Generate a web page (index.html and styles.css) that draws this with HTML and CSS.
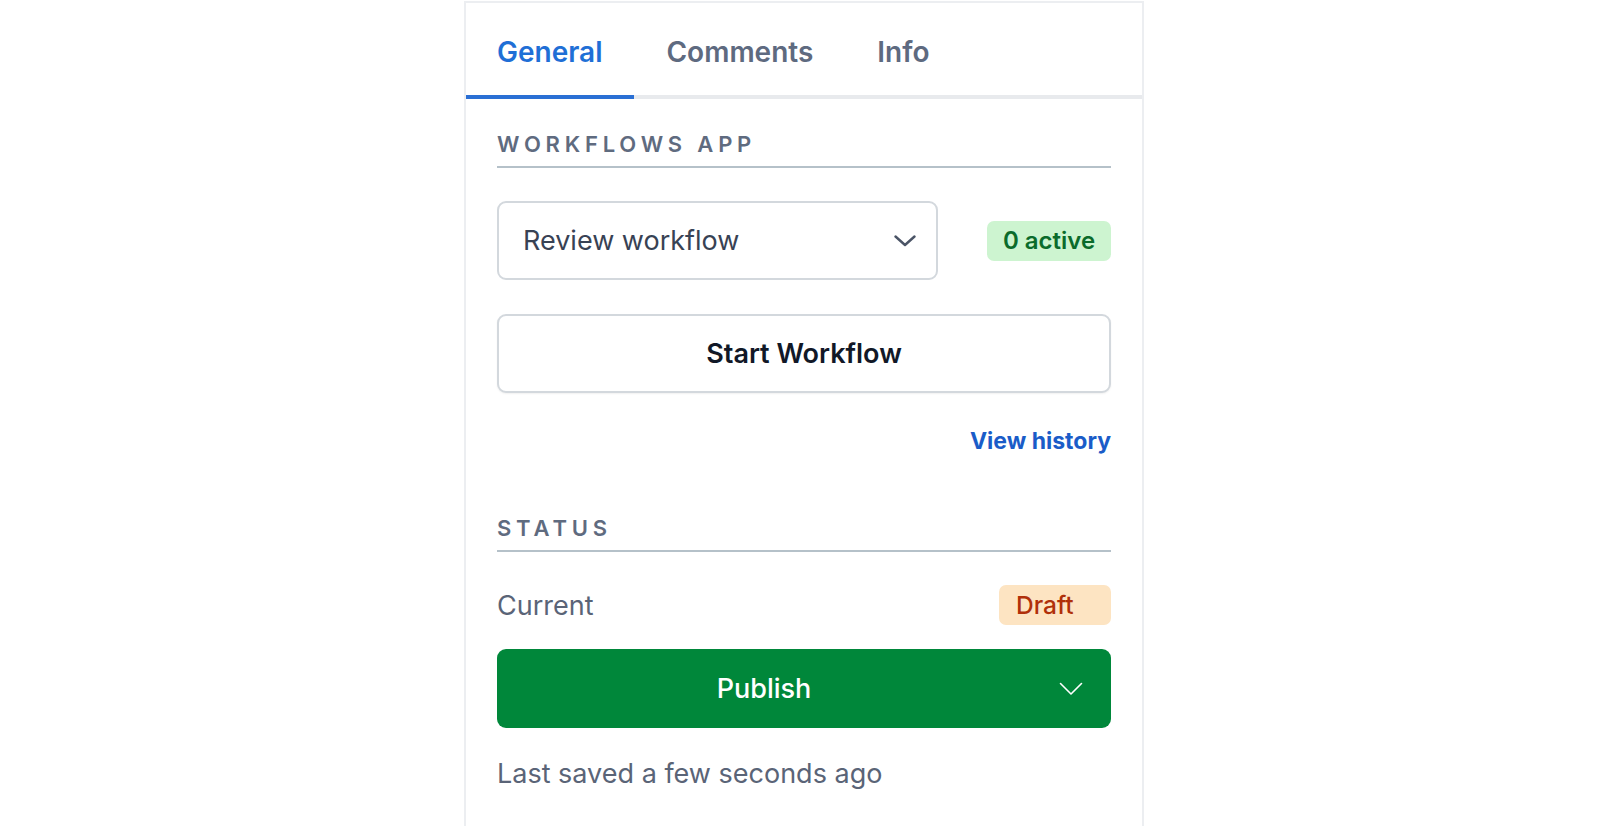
FILE: index.html
```html
<!DOCTYPE html>
<html>

<head>
    <title>Document Sidebar</title>
    <link rel="stylesheet" href="styles.css">
</head>

<body>
    <div class="panel">
        <nav class="tabs">
            <a class="tab active" href="#">General</a>
            <a class="tab" href="#">Comments</a>
            <a class="tab" href="#">Info</a>
        </nav>

        <div class="panel-body">
            <section class="section">
                <h2 class="section-title">Workflows app</h2>
                <div class="workflow-row">
                    <div class="select">
                        <span>Review workflow</span>
                        <svg class="chevron" width="22" height="12" viewBox="0 0 22 12">
                            <path d="M1.5 1.5 L11 10 L20.5 1.5" fill="none" stroke="#4b5466" stroke-width="2.4" stroke-linecap="round" stroke-linejoin="round" />
                        </svg>
                    </div>
                    <span class="badge badge-active">0 active</span>
                </div>
                <button class="btn-outline" type="button">Start Workflow</button>
                <div class="link-row">
                    <a class="link" href="#">View history</a>
                </div>
            </section>

            <section class="section status">
                <h2 class="section-title">Status</h2>
                <div class="status-row">
                    <span class="status-label">Current</span>
                    <span class="badge badge-draft">Draft</span>
                </div>
                <div class="publish">
                    <span class="publish-main">Publish</span>
                    <span class="publish-toggle">
                        <svg width="24" height="14" viewBox="0 0 24 14">
                            <path d="M1.5 1.5 L12 12 L22.5 1.5" fill="none" stroke="#ffffff" stroke-width="1.6" stroke-linecap="round" stroke-linejoin="round" />
                        </svg>
                    </span>
                </div>
                <p class="saved">Last saved a few seconds ago</p>
            </section>
        </div>
    </div>
</body>

</html>
```

FILE: styles.css
```css
body {
    margin: 0;
    font-family: Inter, "Noto Sans", sans-serif;
    background-color: #fff;
}

.panel {
    width: 680px;
    min-height: 100vh;
    margin: 1px 0 0 464px;
    box-sizing: border-box;
    border: 2px solid #eceef1;
    border-bottom: none;
    background-color: #fff;
}

.tabs {
    display: flex;
    border-bottom: 4px solid #e8eaed;
}

.tab {
    display: block;
    padding: 32px 32px 26px;
    margin-bottom: -4px;
    border-bottom: 4px solid transparent;
    font-size: 28px;
    line-height: 34px;
    font-weight: 600;
    color: #5e6a80;
    text-decoration: none;
}

.tab:first-child {
    padding-left: 31px;
}

.tab.active {
    color: #1f6fd6;
    border-bottom-color: #2a6fd4;
}

.panel-body {
    padding: 31px 31px 0 31px;
}

.section-title {
    margin: 0;
    padding-bottom: 8px;
    border-bottom: 2px solid #b5c1c9;
    font-size: 22px;
    line-height: 28px;
    font-weight: 600;
    letter-spacing: 4.8px;
    text-transform: uppercase;
    color: #5f6b7f;
}

.workflow-row {
    display: flex;
    align-items: center;
    justify-content: space-between;
    margin-top: 33px;
}

.select {
    display: flex;
    align-items: center;
    justify-content: space-between;
    width: 441px;
    height: 79px;
    box-sizing: border-box;
    padding: 0 20px 0 24px;
    border: 2px solid #d3d8dd;
    border-radius: 9px;
    font-size: 27px;
    color: #384254;
}

.badge {
    display: inline-block;
    height: 40px;
    line-height: 40px;
    box-sizing: border-box;
    border-radius: 7px;
    font-size: 24px;
}

.badge-active {
    width: 124px;
    text-align: center;
    background-color: #cdf4d0;
    color: #0b6b2b;
    font-weight: 600;
}

.badge-draft {
    width: 112px;
    padding-left: 17px;
    background-color: #fde4c2;
    color: #b0300a;
    font-size: 24.5px;
    font-weight: 500;
}

.btn-outline {
    display: block;
    width: 100%;
    height: 79px;
    margin-top: 34px;
    border: 2px solid #d3d8dd;
    border-radius: 9px;
    background-color: #fff;
    box-shadow: 0 1px 2px rgba(0, 0, 0, 0.06);
    font-family: inherit;
    font-size: 27px;
    font-weight: 600;
    color: #111827;
}

.link-row {
    margin-top: 34px;
    text-align: right;
    line-height: 28px;
}

.link {
    font-size: 23px;
    font-weight: 700;
    color: #1a5cc8;
    text-decoration: none;
}

.status {
    margin-top: 57px;
}

.status-row {
    display: flex;
    align-items: center;
    justify-content: space-between;
    margin-top: 33px;
}

.status-label {
    font-size: 27px;
    color: #5a6477;
}

.publish {
    display: flex;
    height: 79px;
    margin-top: 24px;
    border-radius: 9px;
    background-color: #00873a;
    color: #fff;
}

.publish-main {
    flex: 1;
    display: flex;
    align-items: center;
    justify-content: center;
    font-size: 27px;
    font-weight: 500;
}

.publish-toggle {
    display: flex;
    align-items: center;
    justify-content: center;
    width: 80px;
}

.saved {
    margin: 30px 0 0;
    font-size: 27px;
    line-height: 32px;
    color: #5a6477;
}
```
